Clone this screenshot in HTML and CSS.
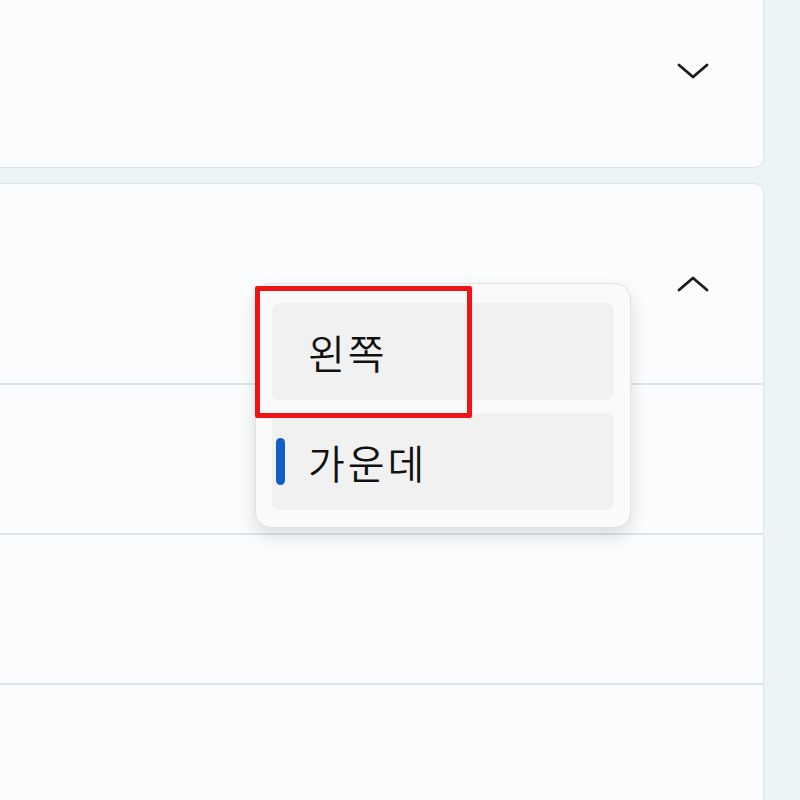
FILE: index.html
```html
<!DOCTYPE html>
<html lang="ko">
<head>
    <meta charset="UTF-8">
    <meta name="viewport" content="width=device-width, initial-scale=1.0">
    <title>맞춤</title>
    <link rel="stylesheet" href="styles.css">
</head>
<body>
    <div class="page">
        <!-- Collapsed card -->
        <section class="card card-top">
            <div class="card-header">
                <svg class="chevron" viewBox="0 0 32 16" width="32" height="16">
                    <polyline points="2,2 16,14 30,2" />
                </svg>
            </div>
        </section>

        <!-- Expanded card -->
        <section class="card card-open">
            <div class="card-header">
                <svg class="chevron" viewBox="0 0 32 16" width="32" height="16">
                    <polyline points="2,14 16,2 30,14" />
                </svg>
            </div>
            <div class="card-row"></div>
            <div class="card-row"></div>
            <div class="card-row"></div>

            <!-- Dropdown menu -->
            <div class="menu">
                <div class="menu-item">왼쪽</div>
                <div class="menu-item selected">가운데</div>
            </div>
            <div class="highlight"></div>
        </section>
    </div>
</body>
</html>
```

FILE: styles.css
```css
/* General page styling */
body {
    margin: 0;
    padding: 0;
    background-color: #eaf4f6;
    font-family: "Noto Sans CJK KR", "Noto Sans", sans-serif;
    color: #111;
    overflow: hidden;
}

.page {
    display: flex;
    flex-direction: column;
    gap: 15px;
    width: 776px;
    margin-left: -12px;
    margin-top: -31px;
}

.card {
    background-color: #fbfcfd;
    border: 1px solid #d9e5e8;
    border-radius: 10px;
}

.card-open {
    position: relative;
}

.card-header {
    height: 199px;
    display: flex;
    align-items: center;
    justify-content: flex-end;
    padding-right: 54px;
}

.card-top .card-header {
    height: 193px;
    padding-top: 4px;
}

.card-row {
    height: 148px;
    border-top: 2px solid #d9e7ea;
}

/* Chevron icons */
.chevron polyline {
    fill: none;
    stroke: #1a1a1a;
    stroke-width: 2.8;
    stroke-linecap: round;
    stroke-linejoin: round;
}

/* Dropdown menu */
.menu {
    position: absolute;
    left: 266px;
    top: 99px;
    width: 342px;
    padding: 19px 16px 17px;
    display: flex;
    flex-direction: column;
    gap: 13px;
    background-color: #fafafa;
    border: 1px solid #e2e2e2;
    border-radius: 16px;
    box-shadow: 0 8px 18px rgba(0, 0, 0, 0.13);
}

.menu-item {
    position: relative;
    height: 97px;
    display: flex;
    align-items: center;
    padding-left: 36px;
    background-color: #f1f1f1;
    border-radius: 8px;
    font-size: 40px;
    font-weight: 350;
    letter-spacing: 3px;
    line-height: 1;
}

.menu-item.selected::before {
    content: "";
    position: absolute;
    left: 4px;
    top: 25px;
    width: 9px;
    height: 47px;
    border-radius: 5px;
    background-color: #0f5fc4;
}

/* Red annotation box */
.highlight {
    position: absolute;
    left: 266px;
    top: 102px;
    width: 207px;
    height: 122px;
    border: 5px solid #f21414;
    border-radius: 2px;
}
```
